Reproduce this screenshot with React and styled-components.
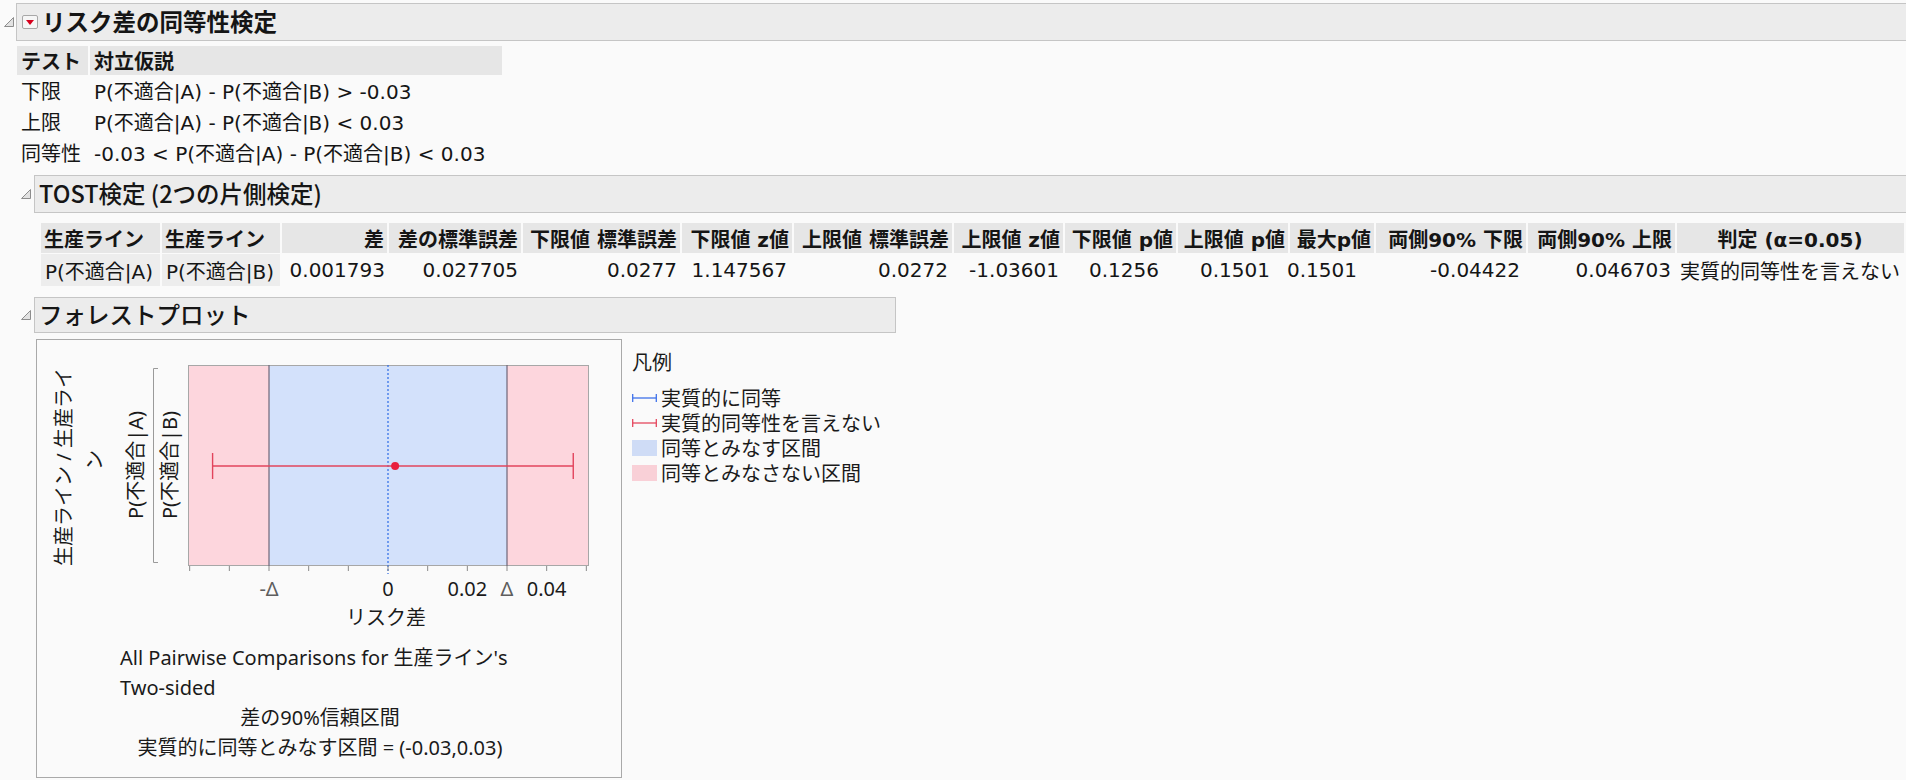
import React from 'react';
import styled, { createGlobalStyle } from 'styled-components';

const GlobalStyle = createGlobalStyle`
  html, body {
    margin: 0;
    padding: 0;
    background: #fafafa;
  }
  body {
    font-family: "DejaVu Sans", "Noto Sans CJK JP", sans-serif;
    font-size: 20px;
    color: #151515;
  }
`;

const Page = styled.div`
  padding: 3px 0 0 4px;
  height: 777px;
  overflow: hidden;
`;

const Outline = styled.section`
  margin-left: ${p => p.$left || 0}px;
  margin-top: ${p => p.$top || 0}px;
`;

const OutlineHead = styled.div`
  display: flex;
  align-items: center;
  gap: ${p => p.$gap || 2}px;
`;

const TitleBar = styled.div`
  box-sizing: border-box;
  height: ${p => p.$h}px;
  flex: ${p => (p.$w ? `0 0 ${p.$w}px` : '1 1 auto')};
  display: flex;
  align-items: center;
  gap: 4px;
  padding-left: ${p => p.$pad || 4}px;
  background: #ececec;
  border: 1px solid #c5c5c5;
  border-right: ${p => (p.$w ? '1px solid #c5c5c5' : 'none')};
  font-family: "Noto Sans CJK JP", "DejaVu Sans", sans-serif;
  font-size: 23.5px;
  font-weight: ${p => (p.$bold ? 700 : 500)};
  line-height: 1;
  white-space: nowrap;
`;

const MenuButton = styled.span`
  box-sizing: border-box;
  width: 16px;
  height: 14px;
  border: 1px solid #a8a8a8;
  border-radius: 2px;
  background: #f6f6f6;
  display: flex;
  align-items: center;
  justify-content: center;
`;

const OutlineBody = styled.div`
  margin-left: ${p => p.$left || 0}px;
  margin-top: ${p => p.$top || 0}px;
`;

const Toggle = () => (
  <svg width="10" height="10" viewBox="0 0 10 10">
    <polygon points="0.5,9.5 9.5,9.5 9.5,0.5" fill="#e2e2e2" stroke="#8d8d8d" strokeWidth="1" />
  </svg>
);

/* hypotheses table */
const HypTable = styled.div`
  display: grid;
  grid-template-columns: 71px 412px;
  column-gap: 2px;
  grid-auto-rows: 31px;
  grid-template-rows: 29px;
`;

const HeadCell = styled.div`
  background: #e6e6e6;
  font-weight: 700;
  display: flex;
  align-items: center;
  justify-content: ${p => p.$align || 'flex-start'};
  padding: 0 ${p => p.$pr ?? 4}px 0 ${p => p.$pl ?? 4}px;
  white-space: nowrap;
  overflow: hidden;
  font-size: ${p => p.$fs || 20}px;
`;

const Cell = styled.div`
  display: flex;
  align-items: center;
  justify-content: ${p => p.$align || 'flex-start'};
  padding: 0 ${p => p.$pr ?? 4}px 0 ${p => p.$pl ?? 4}px;
  background: ${p => (p.$label ? '#ededed' : 'transparent')};
  white-space: nowrap;
`;

/* TOST table */
const TostGrid = styled.div`
  display: grid;
  grid-template-columns: ${p => p.$cols};
  column-gap: 2px;
  row-gap: 1px;
  grid-template-rows: 30px 32px;
`;

const tostCols = [
  { h: '生産ライン', w: 121, ha: 'flex-start', v: 'P(不適合|A)', label: true },
  { h: '生産ライン', w: 120, ha: 'flex-start', v: 'P(不適合|B)', label: true },
  { h: '差', w: 107, v: '0.001793', pr: 2 },
  { h: '差の標準誤差', w: 134, v: '0.027705', pr: 3 },
  { h: '下限値 標準誤差', w: 159, v: '0.0277', pr: 3 },
  { h: '下限値 z値', w: 112, v: '1.147567', pr: 5 },
  { h: '上限値 標準誤差', w: 160, v: '0.0272', pr: 4 },
  { h: '上限値 z値', w: 111, v: '-1.03601', pr: 4 },
  { h: '下限値 p値', w: 113, v: '0.1256', pr: 17 },
  { h: '上限値 p値', w: 112, v: '0.1501', pr: 18 },
  { h: '最大p値', w: 86, v: '0.1501', pr: 17 },
  { h: '両側90% 下限', w: 152, v: '-0.04422', pr: 6 },
  { h: '両側90% 上限', w: 149, v: '0.046703', pr: 4 },
  { h: '判定 (α=0.05)', w: 227, ha: 'center', v: '実質的同等性を言えない', va: 'flex-start', pl: 3 },
];

/* forest plot */
const PlotRow = styled.div`
  display: flex;
  align-items: flex-start;
`;

const PlotBox = styled.div`
  box-sizing: border-box;
  width: 586px;
  height: 439px;
  border: 1px solid #a9a9a9;
  display: flex;
  flex-direction: column;
`;

const ChartSvg = styled.svg`
  display: block;
  text {
    font-family: "Noto Sans", "Noto Sans CJK JP", sans-serif;
    font-size: 20px;
    fill: #1a1a1a;
  }
  text.delta {
    fill: #5e5e5e;
  }
`;

const Caption = styled.div`
  margin-left: 83px;
  width: 400px;
  font-family: "Noto Sans", "Noto Sans CJK JP", sans-serif;
  font-size: 20px;
  line-height: 30px;
  color: #1a1a1a;
`;

const CaptionLine = styled.div`
  text-align: ${p => (p.$center ? 'center' : 'left')};
  white-space: nowrap;
`;

const Legend = styled.div`
  margin-left: 10px;
  padding-top: 10px;
  font-family: "Noto Sans CJK JP", "Noto Sans", sans-serif;
  font-size: 20px;
  color: #1a1a1a;
`;

const LegendTitle = styled.div`
  line-height: 26px;
  margin-bottom: 10px;
`;

const LegendItem = styled.div`
  display: flex;
  align-items: center;
  gap: 4px;
  height: 25px;
  white-space: nowrap;
`;

const Swatch = styled.span`
  width: 25px;
  height: 16px;
  background: ${p => p.$color};
`;

const BarIcon = ({ color }) => (
  <svg width="25" height="10" viewBox="0 0 25 10">
    <line x1="0.5" y1="5" x2="24.5" y2="5" stroke={color} strokeWidth="1.3" />
    <line x1="0.7" y1="1" x2="0.7" y2="9" stroke={color} strokeWidth="1.3" />
    <line x1="24.3" y1="1" x2="24.3" y2="9" stroke={color} strokeWidth="1.3" />
  </svg>
);

const X0 = 351;
const PX = 119 / 0.03;
const xs = v => X0 + v * PX;

const Chart = () => {
  const ticks = [];
  for (let i = -5; i <= 5; i++) ticks.push(xs(i * 0.01));
  const lo = xs(-0.04422);
  const hi = xs(0.046703);
  const pt = xs(0.001793);
  const cy = 126;
  return (
    <ChartSvg width="584" height="303" viewBox="0 0 584 303">
      <rect x="151" y="25" width={xs(-0.03) - 151} height="201" fill="#fdd6dd" />
      <rect x={xs(-0.03)} y="25" width={xs(0.03) - xs(-0.03)} height="201" fill="#d3e1fb" />
      <rect x={xs(0.03)} y="25" width={552 - xs(0.03)} height="201" fill="#fdd6dd" />
      <rect x="151.5" y="25.5" width="400" height="200" fill="none" stroke="#a7a7a7" />
      <line x1={xs(-0.03)} y1="25" x2={xs(-0.03)} y2="226" stroke="#6f6678" strokeWidth="1.2" />
      <line x1={xs(0.03)} y1="25" x2={xs(0.03)} y2="226" stroke="#6f6678" strokeWidth="1.2" />
      <line x1={X0} y1="25" x2={X0} y2="234" stroke="#2c6be6" strokeWidth="1.2" strokeDasharray="2 2" />
      {ticks.map((t, i) => (
        <line key={i} x1={t} y1="226" x2={t} y2="231" stroke="#8a8a8a" strokeWidth="1" />
      ))}
      <line x1={lo} y1={cy} x2={hi} y2={cy} stroke="#e2445c" strokeWidth="1.4" />
      <line x1={lo} y1={cy - 13} x2={lo} y2={cy + 13} stroke="#e2445c" strokeWidth="1.4" />
      <line x1={hi} y1={cy - 13} x2={hi} y2={cy + 13} stroke="#e2445c" strokeWidth="1.4" />
      <circle cx={pt} cy={cy} r="4" fill="#e8203e" />

      <text className="delta" x={xs(-0.03)} y="256" textAnchor="middle">-Δ</text>
      <text x={X0} y="256" textAnchor="middle">0</text>
      <text x={xs(0.02)} y="256" textAnchor="middle">0.02</text>
      <text className="delta" x={xs(0.03)} y="256" textAnchor="middle">Δ</text>
      <text x={xs(0.04)} y="256" textAnchor="middle">0.04</text>
      <text x="349" y="285" textAnchor="middle">リスク差</text>

      <path d="M121 28.5 H116.5 V222.5 H121" fill="none" stroke="#9a9a9a" strokeWidth="1" />
      <text transform="translate(98 125) rotate(-90)" textAnchor="middle" dominantBaseline="central">P(不適合|A)</text>
      <text transform="translate(132 125) rotate(-90)" textAnchor="middle" dominantBaseline="central">P(不適合|B)</text>
      <text transform="translate(26 127) rotate(-90)" textAnchor="middle" dominantBaseline="central">生産ライン / 生産ライ</text>
      <text transform="translate(57 120) rotate(-90)" textAnchor="middle" dominantBaseline="central">ン</text>
    </ChartSvg>
  );
};

export default function App() {
  const cols = tostCols.map((c, i) => `${i === tostCols.length - 1 ? c.w : c.w - 2}px`).join(' ');
  return (
    <>
      <GlobalStyle />
      <Page>
        <Outline>
          <OutlineHead $gap={2}>
            <Toggle />
            <TitleBar $h={38} $bold $pad={5}>
              <MenuButton>
                <svg width="8" height="5" viewBox="0 0 8 5">
                  <polygon points="0,0 8,0 4,5" fill="#d6001c" />
                </svg>
              </MenuButton>
              リスク差の同等性検定
            </TitleBar>
          </OutlineHead>

          <OutlineBody $left={13} $top={5}>
            <HypTable>
              <HeadCell>テスト</HeadCell>
              <HeadCell>対立仮説</HeadCell>
              <Cell>下限</Cell>
              <Cell>P(不適合|A) - P(不適合|B) &gt; -0.03</Cell>
              <Cell>上限</Cell>
              <Cell>P(不適合|A) - P(不適合|B) &lt; 0.03</Cell>
              <Cell>同等性</Cell>
              <Cell>-0.03 &lt; P(不適合|A) - P(不適合|B) &lt; 0.03</Cell>
            </HypTable>

            <Outline $left={4} $top={7}>
              <OutlineHead $gap={3}>
                <Toggle />
                <TitleBar $h={38}>TOST検定 (2つの片側検定)</TitleBar>
              </OutlineHead>
              <OutlineBody $left={20} $top={10}>
                <TostGrid $cols={cols}>
                  {tostCols.map((c, i) => (
                    <HeadCell key={`h${i}`} $align={c.ha || 'flex-end'} $pr={c.ha ? 4 : 3} $pl={3}>
                      {c.h}
                    </HeadCell>
                  ))}
                  {tostCols.map((c, i) => (
                    <Cell
                      key={`d${i}`}
                      $label={c.label}
                      $align={c.va || c.ha || 'flex-end'}
                      $pr={c.pr ?? 4}
                      $pl={c.pl ?? 4}
                    >
                      {c.v}
                    </Cell>
                  ))}
                </TostGrid>
              </OutlineBody>
            </Outline>

            <Outline $left={4} $top={11}>
              <OutlineHead $gap={3}>
                <Toggle />
                <TitleBar $h={36} $w={862}>フォレストプロット</TitleBar>
              </OutlineHead>
              <OutlineBody $left={15} $top={6}>
                <PlotRow>
                  <PlotBox>
                    <Chart />
                    <Caption>
                      <CaptionLine>All Pairwise Comparisons for 生産ライン's</CaptionLine>
                      <CaptionLine>Two-sided</CaptionLine>
                      <CaptionLine $center>差の90%信頼区間</CaptionLine>
                      <CaptionLine $center>実質的に同等とみなす区間 = (-0.03,0.03)</CaptionLine>
                    </Caption>
                  </PlotBox>
                  <Legend>
                    <LegendTitle>凡例</LegendTitle>
                    <LegendItem>
                      <BarIcon color="#3f72ea" />
                      実質的に同等
                    </LegendItem>
                    <LegendItem>
                      <BarIcon color="#e5475e" />
                      実質的同等性を言えない
                    </LegendItem>
                    <LegendItem>
                      <Swatch $color="#cfdcf6" />
                      同等とみなす区間
                    </LegendItem>
                    <LegendItem>
                      <Swatch $color="#f9d0d7" />
                      同等とみなさない区間
                    </LegendItem>
                  </Legend>
                </PlotRow>
              </OutlineBody>
            </Outline>
          </OutlineBody>
        </Outline>
      </Page>
    </>
  );
}
